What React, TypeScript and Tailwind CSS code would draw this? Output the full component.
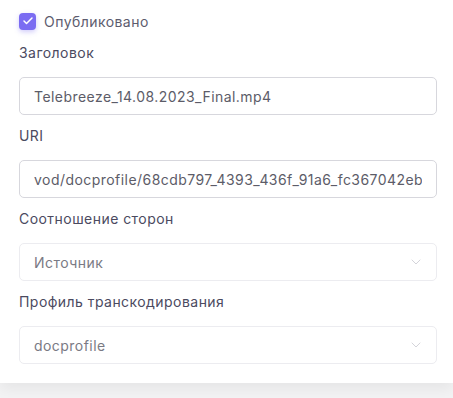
import { Check, ChevronDown } from 'lucide-react'

const font = { fontFamily: 'Inter, "Noto Sans", sans-serif' }

function Label({ children }: { children: string }) {
  return <div className="text-[14px] leading-[20px] tracking-[0.45px] text-[#4b4a5f] mb-[14px]">{children}</div>
}

function TextInput({ value }: { value: string }) {
  return (
    <input
      readOnly
      value={value}
      className="w-full h-[38px] rounded-[5px] border border-[#d7d7dd] bg-white px-[14px] text-[14px] tracking-[0.45px] text-[#5c5c68] outline-none"
      style={font}
    />
  )
}

function Select({ value }: { value: string }) {
  return (
    <div className="h-[38px] rounded-[5px] border border-[#ececf0] bg-white pl-[14px] pr-[12px] flex items-center justify-between">
      <span className="text-[14px] tracking-[0.45px] text-[#7a7a84]">{value}</span>
      <ChevronDown size={16} strokeWidth={1.5} className="text-[#d4d4da]" />
    </div>
  )
}

export default function App() {
  return (
    <div className="w-[453px] h-[398px] bg-[#f3f3f4] overflow-hidden" style={font}>
      <div className="bg-white h-[383px] pl-[19px] pr-[16px] pt-[12px] shadow-[0_6px_14px_rgba(0,0,0,0.06)] flex flex-col">
        <label className="flex items-center gap-[8px] h-[18px]">
          <span className="w-[17px] h-[17px] rounded-[4px] bg-[#7b6cf2] flex items-center justify-center shadow-[0_2px_5px_rgba(123,108,242,0.35)]">
            <Check size={12} strokeWidth={3} className="text-white" />
          </span>
          <span className="text-[14px] tracking-[0.45px] text-[#5d5c6e]">Опубликовано</span>
        </label>

        <div className="mt-[13px]">
          <Label>Заголовок</Label>
          <TextInput value="Telebreeze_14.08.2023_Final.mp4" />
        </div>

        <div className="mt-[11px]">
          <Label>URI</Label>
          <TextInput value="vod/docprofile/68cdb797_4393_436f_91a6_fc367042eb42" />
        </div>

        <div className="mt-[11px]">
          <Label>Соотношение сторон</Label>
          <Select value="Источник" />
        </div>

        <div className="mt-[11px]">
          <Label>Профиль транскодирования</Label>
          <Select value="docprofile" />
        </div>
      </div>
    </div>
  )
}
